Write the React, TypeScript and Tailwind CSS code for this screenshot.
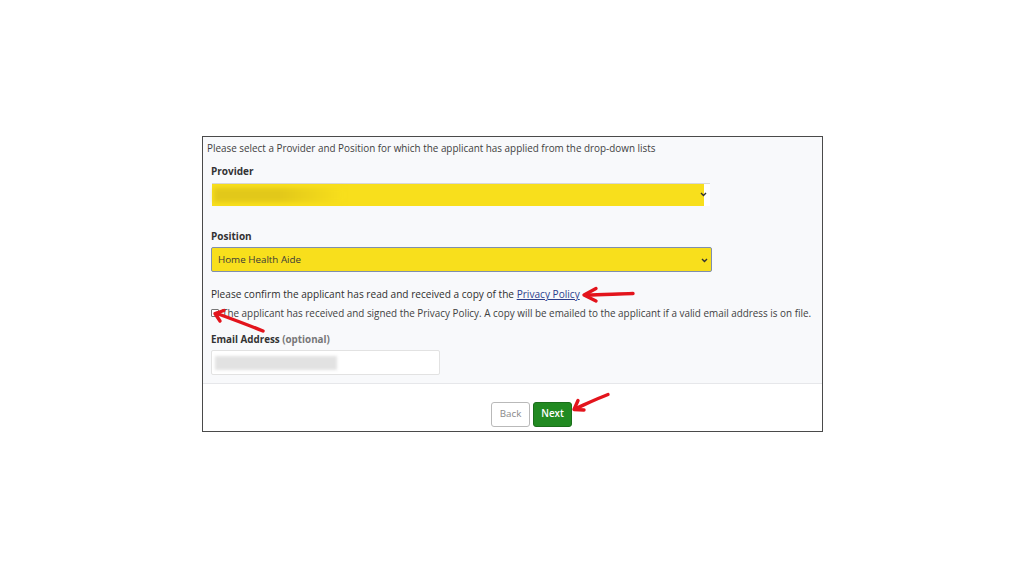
import React from "react";

const FONT = { fontFamily: '"Open Sans", "Liberation Sans", sans-serif' };

function Chevron() {
  return (
    <svg width="7" height="5" viewBox="0 0 7 5" className="shrink-0">
      <path d="M1 1 L3.5 3.5 L6 1" fill="none" stroke="#333" strokeWidth="1.4" />
    </svg>
  );
}

function Arrows() {
  return (
    <svg
      width="1024"
      height="576"
      viewBox="0 0 1024 576"
      className="absolute inset-0 pointer-events-none"
    >
      <g fill="none" stroke="#e3141c" strokeWidth="3.4" strokeLinecap="round" strokeLinejoin="round">
        {/* privacy policy */}
        <path d="M633 293.5 C615 294 600 295 587 295" />
        <path d="M596 288.5 L584 295 L596 301" />
        {/* checkbox */}
        <path d="M263 331 C248 325 232 319 217 313.5" />
        <path d="M224 310.5 L215 313.5 L220 321" />
        {/* next */}
        <path d="M608 394.5 C596 399 586 404 576 408.5" />
        <path d="M578 400.5 L574 409.5 L584 410" />
      </g>
    </svg>
  );
}

export default function App() {
  return (
    <div className="relative w-[1024px] h-[576px] bg-white overflow-hidden" style={FONT}>
      <div className="pt-[136px] pl-[202px]">
        <div className="w-[621px] h-[296px] border border-[#4a4a4a] bg-white flex flex-col">
          {/* form body */}
          <div className="bg-[#f8f9fb] border-b border-[#e6e7ea] h-[247px]">
            <p className="pt-[5px] pl-[4px] text-[9.9px] leading-[12px] text-[#3f3f3f]">
              Please select a Provider and Position for which the applicant has applied from the drop-down lists
            </p>

            <div className="pl-[8px]">
              <p className="mt-[11px] text-[10px] leading-[12px] font-bold text-[#333]">Provider</p>
              <div className="mt-[6px] ml-[1px] w-[498px] h-[23px] border-t border-[#d8d8d8] bg-white flex items-center">
                <div className="flex-1 h-full bg-[#f8df1c] flex items-center pl-[2px]">
                  <div className="w-[130px] h-[14px] bg-gradient-to-r from-[#e2c81a] via-[#e2c81a] to-[#f8df1c] blur-[2px]" />
                </div>
                <div className="w-[6px] h-full bg-white relative">
                  <div className="absolute -left-[4px] top-[8px]">
                    <Chevron />
                  </div>
                </div>
              </div>

              <p className="mt-[24px] text-[10px] leading-[12px] font-bold text-[#333]">Position</p>
              <div className="mt-[5px] w-[501px] h-[25px] border border-[#7f8fae] rounded-[2px] bg-[#f8df1c] flex items-center justify-between pl-[6px] pr-[3px] pt-[2px]">
                <span className="text-[9.8px] text-[#3a3a3a]">Home Health Aide</span>
                <Chevron />
              </div>

              <p className="mt-[16px] text-[10.1px] leading-[12px] text-[#2e2e2e]">
                Please confirm the applicant has read and received a copy of the{" "}
                <span className="text-[#2c3e8c] underline">Privacy Policy</span>
              </p>

              <div className="mt-[7px] flex items-center gap-[3px]">
                <span className="w-[8px] h-[8px] border border-[#777] rounded-[1px] bg-white shrink-0" />
                <span className="text-[9.9px] leading-[12px] text-[#3f3f3f] whitespace-nowrap">
                  The applicant has received and signed the Privacy Policy. A copy will be emailed to the applicant if a valid email address is on file.
                </span>
              </div>

              <p className="mt-[15px] text-[9.8px] leading-[12px] font-bold text-[#333]">
                Email Address <span className="text-[#777]">(optional)</span>
              </p>
              <div className="mt-[4px] w-[229px] h-[25px] border border-[#e2e2e2] rounded-[2px] bg-white flex items-center pl-[3px]">
                <div className="w-[122px] h-[14px] bg-[#e2e2e2] blur-[1.5px]" />
              </div>
            </div>
          </div>

          {/* footer */}
          <div className="flex-1 bg-white pt-[18px] pl-[288px] flex gap-[3px] items-start">
            <button className="w-[39px] h-[25px] border border-[#b9b9b9] rounded-[3px] bg-white text-[9.8px] text-[#8a8a8a]">
              Back
            </button>
            <button className="w-[39px] h-[25px] border border-[#1a6e1a] rounded-[3px] bg-[#218a21] text-[9.8px] font-semibold text-white">
              Next
            </button>
          </div>
        </div>
      </div>
      <Arrows />
    </div>
  );
}
